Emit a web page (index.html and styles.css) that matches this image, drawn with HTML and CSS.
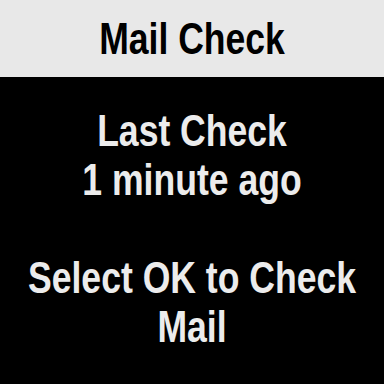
FILE: index.html
```html
<!DOCTYPE html>
<html>
<head>
<meta charset="utf-8">
<link rel="stylesheet" href="styles.css">
</head>
<body>
<div class="screen">
  <header class="title-bar"><span class="text">Mail Check</span></header>
  <main class="content">
    <p class="text">Last Check<br>1 minute ago</p>
    <p class="text prompt">Select OK to Check<br>Mail</p>
  </main>
</div>
</body>
</html>
```
FILE: styles.css
```css
html, body {
  margin: 0;
  padding: 0;
  background: #000;
}
.screen {
  width: 384px;
  height: 384px;
  overflow: hidden;
  background: #000;
  font-family: "Liberation Sans", Arial, sans-serif;
  font-weight: bold;
  font-size: 45px;
  line-height: 49px;
  text-align: center;
}
.text {
  display: block;
  margin: 0 -80px;
  white-space: nowrap;
  transform: scaleX(0.79);
  transform-origin: center;
}
.title-bar {
  height: 49px;
  padding: 14px 0;
  background: #e8e8e8;
  color: #000;
}
.content {
  color: #ececec;
  padding-top: 29px;
}
.prompt {
  margin-top: 49px;
}
```
